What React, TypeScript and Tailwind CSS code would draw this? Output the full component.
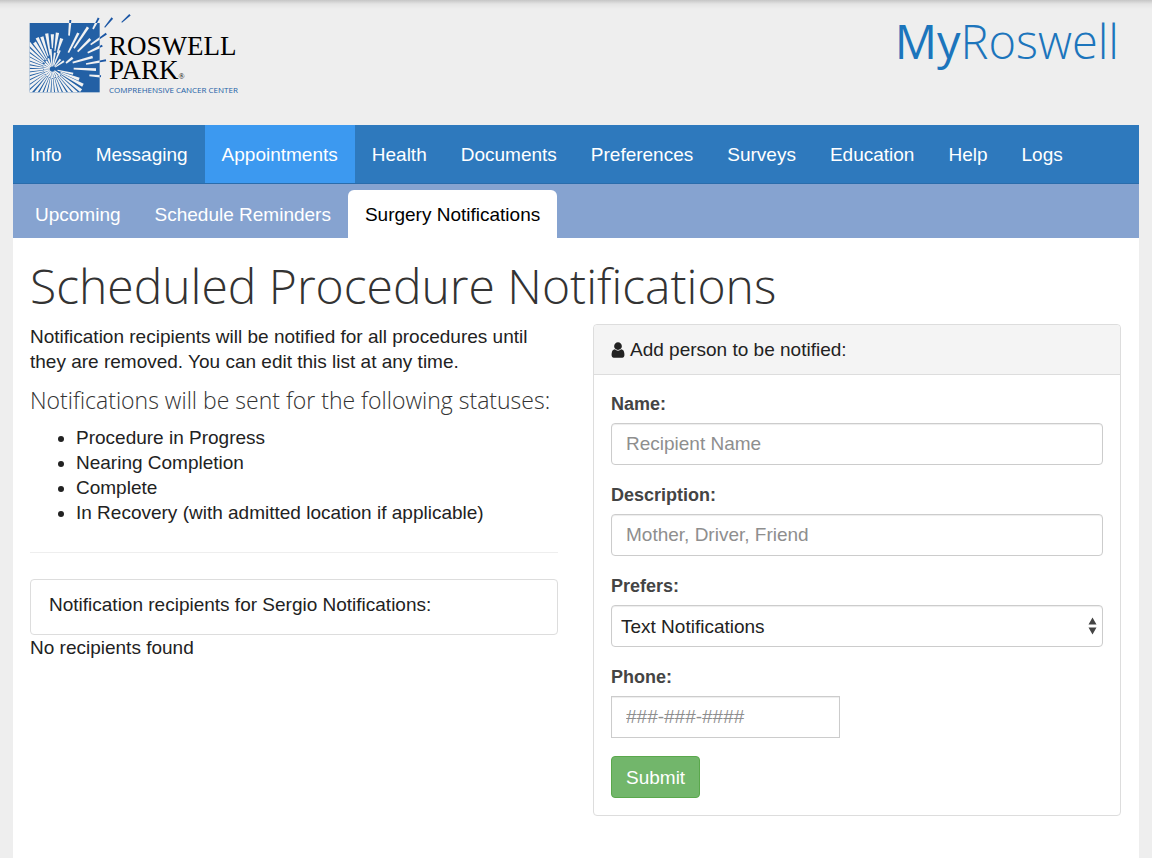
import type { ReactNode } from "react"

const navItems = [
  "Info",
  "Messaging",
  "Appointments",
  "Health",
  "Documents",
  "Preferences",
  "Surveys",
  "Education",
  "Help",
  "Logs",
]

const subItems = ["Upcoming", "Schedule Reminders", "Surgery Notifications"]

const statuses = [
  "Procedure in Progress",
  "Nearing Completion",
  "Complete",
  "In Recovery (with admitted location if applicable)",
]

// [angle in degrees, start radius, end radius], measured from the burst centre
const rays = [
  [-82, 54, 110], [-73, 50, 96], [-90, 62, 104], [-99, 42, 108], [-108, 40, 102],
  [-116, 36, 104], [-124, 32, 96], [-132, 36, 106], [-140, 30, 104], [-148, 34, 104],
  [-156, 26, 90], [-165, 30, 90], [-174, 24, 90], [177, 28, 90], [168, 24, 90],
  [159, 28, 90], [150, 22, 96], [142, 28, 100], [134, 22, 110], [125, 28, 100],
  [116, 24, 100], [107, 28, 90], [98, 24, 90], [89, 30, 90], [80, 24, 90],
  [71, 28, 90], [62, 24, 90], [53, 30, 100], [45, 26, 102], [37, 32, 108],
  [28, 28, 104], [21, 26, 86], [13, 16, 64],
  [-95, 8, 60], [-81, 8, 50], [-68, 12, 60], [-50, 10, 38], [-34, 10, 42],
  [-112, 8, 34], [-129, 8, 30], [-145, 8, 28], [-162, 8, 28], [-178, 8, 26],
  [164, 8, 26], [146, 8, 26], [128, 8, 26], [110, 8, 26], [92, 8, 28],
  [74, 8, 26], [56, 8, 28], [38, 8, 30],
]

// [x1, y1, x2, y2] of the loose sparks on the right of the burst
const sparks = [
  [147, 77, 151, 30],
  [145, 128, 175, 69],
  [162, 115, 204, 52],
  [173, 125, 211, 87],
  [219, 57, 236, 24],
  [212, 104, 259, 71],
  [203, 128, 247, 107],
  [138, 159, 158, 143],
  [158, 158, 218, 141],
  [198, 162, 258, 151],
  [161, 176, 228, 179],
  [208, 196, 243, 199],
  [254, 52, 277, 24],
  [305, 37, 330, 14],
]

function wedge(x1: number, y1: number, x2: number, y2: number, thin: number, wide: number) {
  const len = Math.hypot(x2 - x1, y2 - y1)
  const nx = -(y2 - y1) / len / 2
  const ny = (x2 - x1) / len / 2
  return [
    [x1 + nx * thin, y1 + ny * thin],
    [x2 + nx * wide, y2 + ny * wide],
    [x2 - nx * wide, y2 - ny * wide],
    [x1 - nx * thin, y1 - ny * thin],
  ]
    .map((p) => p.join(","))
    .join(" ")
}

function rayPoints([deg, r0, r1]: number[]) {
  const c = Math.cos((deg * Math.PI) / 180)
  const s = Math.sin((deg * Math.PI) / 180)
  return wedge(97 + r0 * c, 177 + r0 * s, 97 + r1 * c, 177 + r1 * s, 3, r1 > 70 ? 10 : 6)
}

function BurstLogo() {
  return (
    <svg viewBox="27 12 216 240" className="h-20 w-[72px] shrink-0 overflow-visible" aria-hidden="true">
      <defs>
        <clipPath id="square">
          <rect x="29" y="39" width="210" height="208" />
        </clipPath>
      </defs>
      <rect x="29" y="39" width="210" height="208" fill="#2360a5" />
      {sparks.map(([x1, y1, x2, y2], i) => (
        <polygon key={i} points={wedge(x1, y1, x2, y2, 3, 6)} fill="#1b56a4" />
      ))}
      <g clipPath="url(#square)" fill="#f2f2f2">
        {sparks.map(([x1, y1, x2, y2], i) => (
          <polygon key={i} points={wedge(x1, y1, x2, y2, 5, 8)} />
        ))}
        {rays.map((ray, i) => (
          <polygon key={i} points={rayPoints(ray)} />
        ))}
      </g>
    </svg>
  )
}

function UserIcon() {
  return (
    <svg viewBox="0 0 1792 1792" className="-ml-0.5 size-[18px]" fill="currentColor" aria-hidden="true">
      <path d="M1536 1399q0 109-62.5 187t-150.5 78h-854q-88 0-150.5-78t-62.5-187q0-85 8.5-160.5t31.5-152 58.5-131 94-89 134.5-34.5q131 128 313 128t313-128q76 0 134.5 34.5t94 89 58.5 131 31.5 152 8.5 160.5zm-256-887q0 159-112.5 271.5t-271.5 112.5-271.5-112.5-112.5-271.5 112.5-271.5 271.5-112.5 271.5 112.5 112.5 271.5z" />
    </svg>
  )
}

function Field({ id, label, children }: { id: string; label: string; children: ReactNode }) {
  return (
    <div className="mb-[18px]">
      <label htmlFor={id} className="mb-1.5 block text-[18px] leading-[25px] font-bold text-[#444]">
        {label}
      </label>
      {children}
    </div>
  )
}

const inputClass =
  "block h-[42px] border border-[#ccc] bg-white px-3.5 shadow-[inset_0_1px_1px_rgba(0,0,0,0.075)] placeholder:text-[#8e8e8e] placeholder:opacity-100"

export default function App() {
  return (
    <div className="flex min-h-screen flex-col bg-[linear-gradient(to_bottom,#c6c6c6,#e4e4e4_4px,#eee_9px)] px-[13px] font-['Liberation_Sans',Arial,sans-serif] text-[19px] leading-[25px] text-[#222]">
      <header className="flex h-[125px] items-start justify-between pt-3.5 pr-5 pl-4">
        <a href="#" className="flex items-start gap-2">
          <BurstLogo />
          <span className="flex flex-col pt-5 font-['Liberation_Serif',serif] text-[27px] leading-6 text-black">
            <span>ROSWELL</span>
            <span>
              PARK<span className="text-[8px] leading-none">®</span>
            </span>
            <span className="font-['Open_Sans',sans-serif] text-[8px] leading-4 whitespace-nowrap text-[#2360a5]">
              COMPREHENSIVE CANCER CENTER
            </span>
          </span>
        </a>
        <div className="font-['Open_Sans',sans-serif] text-[47px] leading-[55px] font-light text-[#1c75bc]">
          <span className="font-normal">My</span>Roswell
        </div>
      </header>

      <nav className="flex h-[58px] bg-[#2e79bd] text-white">
        {navItems.map((item) => (
          <a
            key={item}
            href="#"
            className={`flex items-center px-[17px] ${item === "Appointments" ? "bg-[#3c99f0]" : ""}`}
          >
            {item}
          </a>
        ))}
      </nav>

      <nav className="flex h-[55px] border-t border-[#2a6cab] bg-[#86a3d0] pt-1.5 pl-[5px] text-white">
        {subItems.map((item) => (
          <a
            key={item}
            href="#"
            className={`flex items-center px-[17px] ${
              item === "Surgery Notifications" ? "rounded-t-md bg-white text-black" : ""
            }`}
          >
            {item}
          </a>
        ))}
      </nav>

      <main className="flex-1 bg-white pt-[21px] pr-[18px] pb-11 pl-[17px]">
        <h1 className="font-['Open_Sans',sans-serif] text-[48px] leading-[53px] font-light text-[#333]">
          Scheduled Procedure Notifications
        </h1>

        <div className="mt-3 grid grid-cols-2 items-start gap-[35px]">
          <section>
            <p>
              Notification recipients will be notified for all procedures until they are removed. You can edit this list
              at any time.
            </p>
            <h4 className="mt-3.5 font-['Open_Sans',sans-serif] text-[23px] leading-[25px] font-light whitespace-nowrap text-[#333]">
              Notifications will be sent for the following statuses:
            </h4>
            <ul className="mt-3 list-disc pl-[46px]">
              {statuses.map((status) => (
                <li key={status}>{status}</li>
              ))}
            </ul>
            <hr className="mt-[27px] mb-[26px] border-[#eee]" />
            <div className="rounded border border-[#ddd] px-[18px] pt-3 pb-[17px]">
              Notification recipients for Sergio Notifications:
            </div>
            <p>No recipients found</p>
          </section>

          <section className="rounded border border-[#ddd]">
            <div className="flex items-center gap-[3px] rounded-t border-b border-[#ddd] bg-[#f4f4f4] px-[17px] py-3">
              <UserIcon />
              Add person to be notified:
            </div>
            <form className="p-[17px]" onSubmit={(e) => e.preventDefault()}>
              <Field id="name" label="Name:">
                <input id="name" type="text" placeholder="Recipient Name" className={`${inputClass} w-full rounded`} />
              </Field>
              <Field id="description" label="Description:">
                <input
                  id="description"
                  type="text"
                  placeholder="Mother, Driver, Friend"
                  className={`${inputClass} w-full rounded`}
                />
              </Field>
              <Field id="prefers" label="Prefers:">
                <div className="relative">
                  <select
                    id="prefers"
                    className="block h-[42px] w-full appearance-none rounded border border-[#ccc] bg-white px-[9px] shadow-[inset_0_1px_1px_rgba(0,0,0,0.075)]"
                  >
                    <option>Text Notifications</option>
                    <option>Email Notifications</option>
                  </select>
                  <svg
                    viewBox="0 0 9 18"
                    className="pointer-events-none absolute top-3 right-1.5 h-[18px] w-[9px]"
                    fill="#444"
                    aria-hidden="true"
                  >
                    <path d="M4.5 .5 8.5 7.5H.5zM4.5 17.5 .5 10.5h8z" />
                  </svg>
                </div>
              </Field>
              <Field id="phone" label="Phone:">
                <input id="phone" type="tel" placeholder="###-###-####" className={`${inputClass} w-[229px]`} />
              </Field>
              <button type="submit" className="block h-[42px] rounded border border-[#5aa84c] bg-[#72b66b] px-3.5 text-white">
                Submit
              </button>
            </form>
          </section>
        </div>
      </main>
    </div>
  )
}
